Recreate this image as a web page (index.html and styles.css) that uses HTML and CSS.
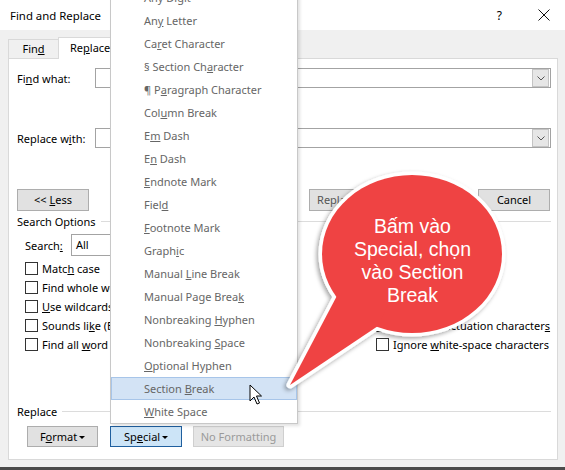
FILE: index.html
```html
<!DOCTYPE html>
<html>
<head>
<meta charset="utf-8">
<title>Find and Replace</title>
<link rel="stylesheet" href="styles.css">
</head>
<body>
<div class="win">
  <div class="titlebar">
    <span class="title">Find and Replace</span>
    <span class="help">?</span>
    <span class="close"><svg width="12" height="12" viewBox="0 0 12 12"><path d="M0.5 0.5L11.5 11.5M11.5 0.5L0.5 11.5" stroke="#111" stroke-width="1" fill="none"/></svg></span>
  </div>
  <div class="tabs">
    <div class="tab find">Fin<u>d</u></div>
    <div class="tab active">Re<u>p</u>lace</div>
    <div class="tab">Go To</div>
  </div>
  <div class="panel">
    <div class="field first">
      <span class="lbl">Fi<u>n</u>d what:</span>
      <div class="combo"><span class="drop"><svg width="8" height="5" viewBox="0 0 8 5"><path d="M0.5 0.5L4 4L7.5 0.5" stroke="#555" fill="none"/></svg></span></div>
    </div>
    <div class="field second">
      <span class="lbl">Replace w<u>i</u>th:</span>
      <div class="combo"><span class="drop"><svg width="8" height="5" viewBox="0 0 8 5"><path d="M0.5 0.5L4 4L7.5 0.5" stroke="#555" fill="none"/></svg></span></div>
    </div>
    <div class="actions">
      <div class="btn">&lt;&lt; <u>L</u>ess</div>
      <span class="grow"></span>
      <div class="btn">&nbsp;<u>R</u>eplace</div>
      <div class="btn gap dim">Replace <u>A</u>ll</div>
      <div class="btn gap">Find Next</div>
      <div class="btn gap2">Cancel</div>
    </div>
    <div class="section so"><span>Search Options</span><span class="line"></span></div>
    <div class="search">
      <span class="lbl2">Search<u>:</u></span>
      <div class="select">All</div>
    </div>
    <div class="opts">
      <div class="opt"><span class="cb"></span><span>Matc<u>h</u> case</span></div>
      <div class="opt"></div>
      <div class="opt"><span class="cb"></span><span>Find whole words onl<u>y</u></span></div>
      <div class="opt"></div>
      <div class="opt"><span class="cb"></span><span><u>U</u>se wildcards</span></div>
      <div class="opt"></div>
      <div class="opt"><span class="cb"></span><span>Sounds li<u>k</u>e (English)</span></div>
      <div class="opt"><span class="cb"></span><span>Ignore punctuation character<u>s</u></span></div>
      <div class="opt"><span class="cb"></span><span>Find all <u>w</u>ord forms (English)</span></div>
      <div class="opt"><span class="cb"></span><span>Ignore <u>w</u>hite-space characters</span></div>
    </div>
    <div class="section rp"><span>Replace</span><span class="line"></span></div>
    <div class="bottom">
      <div class="btn b-format">F<u>o</u>rmat <span class="caret"></span></div>
      <div class="btn b-special">Sp<u>e</u>cial <span class="caret"></span></div>
      <div class="btn b-nofmt">No Formatting</div>
    </div>
  </div>

  <div class="menu">
    <div class="mi">Any Di<u>g</u>it</div>
    <div class="mi">An<u>y</u> Letter</div>
    <div class="mi">Ca<u>r</u>et Character</div>
    <div class="mi">§ Section Ch<u>a</u>racter</div>
    <div class="mi">¶ P<u>a</u>ragraph Character</div>
    <div class="mi">Col<u>u</u>mn Break</div>
    <div class="mi">E<u>m</u> Dash</div>
    <div class="mi">E<u>n</u> Dash</div>
    <div class="mi"><u>E</u>ndnote Mark</div>
    <div class="mi">Fiel<u>d</u></div>
    <div class="mi"><u>F</u>ootnote Mark</div>
    <div class="mi">Graph<u>i</u>c</div>
    <div class="mi">Manual <u>L</u>ine Break</div>
    <div class="mi">Manual Page Brea<u>k</u></div>
    <div class="mi">Nonbreaking <u>H</u>yphen</div>
    <div class="mi">Nonbreaking <u>S</u>pace</div>
    <div class="mi"><u>O</u>ptional Hyphen</div>
    <div class="mi hl">Section <u>B</u>reak</div>
    <div class="mi"><u>W</u>hite Space</div>
  </div>

  <svg class="cursor" width="14" height="22" viewBox="0 0 14 22">
    <path d="M1 1 L1 17 L5 13 L8 20 L10.5 19 L7.5 12 L12.5 12 Z" fill="#fff" stroke="#000" stroke-width="1" stroke-linejoin="round"/>
  </svg>

  <svg class="bubble" width="565" height="470" viewBox="0 0 565 470">
    <defs>
      <filter id="sh" x="-20%" y="-20%" width="140%" height="140%">
        <feDropShadow dx="-2" dy="2" stdDeviation="2" flood-color="#000" flood-opacity="0.35"/>
      </filter>
    </defs>
    <g filter="url(#sh)" fill="#fff" stroke="#fff" stroke-width="7" stroke-linejoin="round">
      <ellipse cx="412" cy="254" rx="90" ry="79"/>
      <polygon points="340,290 290,385 378,326 412,254"/>
    </g>
    <g fill="#ef4343">
      <ellipse cx="412" cy="254" rx="90" ry="79"/>
      <polygon points="340,290 290,385 378,326 412,254"/>
    </g>
  </svg>
  <div class="bubble-text">Bấm vào<br>Special, chọn<br>vào Section<br>Break</div>
</div>
</body>
</html>
```

FILE: styles.css
```css
* { box-sizing: border-box; }
body {
  margin: 0;
  font-family: "Noto Sans", "Open Sans", sans-serif;
  font-size: 11px;
  color: #000;
}
u { text-decoration: underline; text-underline-offset: 1px; }

.win {
  position: relative;
  width: 565px;
  height: 470px;
  background: #f0f0f0;
  border-bottom: 3px solid #4b4b4b;
  overflow: hidden;
}

.titlebar {
  height: 30px;
  background: #fff;
  display: flex;
  align-items: center;
  padding: 0 15px 0 10px;
}
.title { flex: 1; font-size: 11.4px; }
.help { margin-right: 36px; font-size: 12px; }
.close { display: flex; }

.tabs {
  height: 28px;
  display: flex;
  align-items: flex-end;
  padding-left: 8px;
}
.tab {
  height: 19px;
  border: 1px solid #d9d9d9;
  border-bottom: 0;
  background: #f0f0f0;
  padding: 0 12px;
  line-height: 17px;
  margin-right: -1px;
  white-space: nowrap;
}
.tab.find { width: 51px; text-align: center; padding: 0; }
.tab.active {
  height: 22px;
  line-height: 20px;
  background: #fff;
  margin-bottom: -1px;
  position: relative;
  z-index: 1;
  padding: 0 11px;
}

.panel {
  margin-left: 8px;
  width: 550px;
  height: 402px;
  background: #fff;
  border: 1px solid #d9d9d9;
  padding: 0 6px 0 8px;
}

.field {
  display: flex;
  align-items: center;
  height: 20px;
}
.field.first { margin-top: 9px; }
.field.second { margin-top: 40px; }
.lbl { width: 78px; white-space: nowrap; }
.combo {
  flex: 1;
  height: 20px;
  border: 1px solid #a3a3a3;
  background: #fff;
  display: flex;
  justify-content: flex-end;
  padding: 0 1px 0 0;
}
.drop {
  width: 17px;
  height: 18px;
  background: #e6e6e6;
  border: 1px solid #c4c4c4;
  display: flex;
  align-items: center;
  justify-content: center;
}

.actions {
  margin-top: 41px;
  display: flex;
  height: 22px;
  padding-right: 1px;
}
.grow { flex: 1; }
.btn {
  height: 22px;
  width: 72px;
  background: #e1e1e1;
  border: 1px solid #adadad;
  text-align: center;
  line-height: 20px;
  white-space: nowrap;
  flex: none;
}
.btn.dim { color: #555; }
.btn.gap { margin-left: 12px; }
.btn.gap2 { margin-left: 13px; }

.section {
  display: flex;
  align-items: center;
  gap: 5px;
  height: 14px;
}
.section .line { flex: 1; height: 1px; background: #dcdcdc; }
.section.so { margin-top: 3px; }
.section.rp { margin-top: 50px; }

.search {
  margin-top: 6px;
  margin-left: 8px;
  display: flex;
  align-items: center;
  height: 22px;
}
.lbl2 { width: 46px; }
.select {
  width: 170px;
  height: 22px;
  border: 1px solid #a3a3a3;
  padding-left: 4px;
  line-height: 20px;
}

.opts {
  margin-top: 3px;
  margin-left: 8px;
  display: grid;
  grid-template-columns: 351px 1fr;
  grid-auto-rows: 19px;
}
.opt {
  display: flex;
  align-items: center;
  gap: 4px;
  white-space: nowrap;
}
.cb {
  width: 13px;
  height: 13px;
  border: 1px solid #333;
  background: #fff;
  flex: none;
}

.bottom {
  margin-top: 8px;
  margin-left: 10px;
  display: flex;
}
.bottom .btn { height: 21px; line-height: 19px; }
.b-format { width: 71px; }
.b-special {
  width: 72px;
  margin-left: 12px;
  background: #cce4f7;
  border-color: #1f5f9e;
}
.b-nofmt {
  width: 91px;
  margin-left: 11px;
  color: #9a9a9a;
  background: #e5e5e5;
  border-color: #cfcfcf;
}
.caret {
  display: inline-block;
  vertical-align: middle;
  border-left: 3px solid transparent;
  border-right: 3px solid transparent;
  border-top: 3px solid #000;
  margin-left: -1px;
  position: relative;
  top: -1px;
}

.menu {
  position: absolute;
  left: 110px;
  top: -15px;
  width: 188px;
  background: #fff;
  border: 1px solid #c8c8c8;
  box-shadow: 2px 2px 3px rgba(0, 0, 0, 0.12);
  color: #666;
  z-index: 5;
}
.mi {
  height: 23px;
  padding-left: 32px;
  border: 1px solid transparent;
  line-height: 21px;
  white-space: nowrap;
}
.mi.hl {
  background: #d3e3f5;
  border-color: #a7c5e9;
}

.cursor {
  position: absolute;
  left: 249px;
  top: 384px;
  z-index: 6;
}

.bubble {
  position: absolute;
  left: 0;
  top: 0;
  z-index: 7;
}
.bubble-text {
  position: absolute;
  left: 322px;
  top: 215px;
  width: 181px;
  text-align: center;
  font-family: "Liberation Sans", Arial, sans-serif;
  font-size: 19.5px;
  line-height: 23px;
  color: #fff;
  z-index: 8;
}
```
